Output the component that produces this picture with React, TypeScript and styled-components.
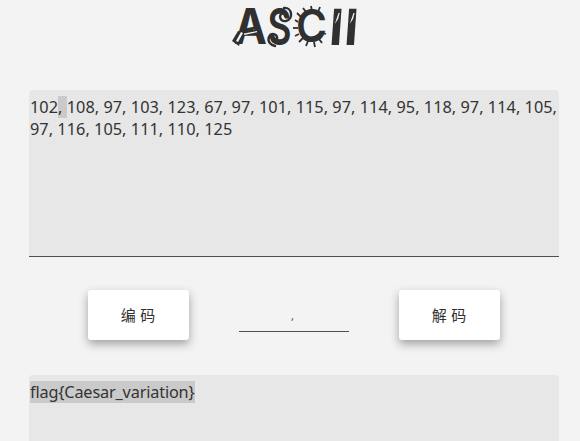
import React from 'react';
import styled, { createGlobalStyle } from 'styled-components';

const GlobalStyle = createGlobalStyle`
  * { box-sizing: border-box; }
  html, body { margin: 0; height: 100%; overflow: hidden; background: #f3f3f3; }
`;

const Page = styled.main`
  height: 441px;
  overflow: hidden;
  padding: 0 21px 0 29px;
  background: #f3f3f3;
  color: #333;
  font-family: 'Noto Sans', 'Noto Sans CJK SC', sans-serif;
`;

const Header = styled.header`
  display: flex;
  height: 90px;
  padding-left: 199px;
`;

const Logo = styled.svg`
  display: block;
  width: 136px;
  height: 54px;
  overflow: visible;
  font-family: 'Inter', sans-serif;
  font-weight: 700;
  fill: #303030;
`;

const TextPanel = styled.section<{ $height: number }>`
  height: ${({ $height }) => $height}px;
  padding: 6px 0 0 1px;
  background: #e7e7e7;
  border-bottom: 1px solid #505050;
  border-radius: 4px 4px 0 0;
  font-size: 16.3px;
  line-height: 22px;
  white-space: nowrap;
`;

const Line = styled.div<{ $spacing?: number }>`
  height: 22px;
  letter-spacing: ${({ $spacing = 0 }) => $spacing}px;
`;

const Selected = styled.span`
  display: inline-block;
  height: 22px;
  background: #cacaca;
  white-space: pre;
`;

const Controls = styled.div`
  display: flex;
  gap: 50px;
  height: 118px;
  padding: 33px 0 0 59px;
`;

const ActionButton = styled.button`
  width: 101px;
  height: 50px;
  padding: 0 1px 1px 0;
  border: 0;
  border-radius: 3px;
  background: #fff;
  box-shadow: 0 4px 10px rgba(0, 0, 0, 0.34);
  color: #303030;
  font: 15px/20px 'Noto Sans CJK SC', sans-serif;
  word-spacing: 1px;
`;

const Separator = styled.div`
  width: 110px;
  height: 42px;
  padding: 18px 3px 0 0;
  border-bottom: 1px solid #505050;
  font-size: 11px;
  line-height: 16px;
  text-align: center;
  color: #304c70;
`;

const spurs = [
  [301, 17, 297, 13], [306, 12, 303, 8], [312, 11, 311, 6],
  [318, 12, 320, 7], [298, 22, 295, 20], [298, 28, 293, 28],
  [299, 34, 295, 36], [303, 38, 299, 42], [308, 41, 306, 46],
  [314, 42, 315, 47], [319, 39, 322, 43], [322, 33, 326, 34],
];

function AsciiLogo() {
  return (
    <Logo viewBox="228 0 136 54" aria-label="ASCII">
      <text x="234" y="44" fontSize="50" textLength="33" lengthAdjust="spacingAndGlyphs">A</text>
      <path d="M232 41l6-10 5 1-4 14z" />
      <path d="M236 41l5-9 2 1-5 9z M244 33.5l13-2.5v1.2l-13 2.8z" fill="#f3f3f3" />
      <path d="M243 29l14-3v3l-14 3z" />
      <text x="267.5" y="45" fontSize="51" fontWeight="600" textLength="24" lengthAdjust="spacingAndGlyphs">S</text>
      <g fill="none" stroke="#303030" strokeWidth="2.4" strokeLinecap="round">
        <path d="M284 8c8-1 10 11 2 13-6 1-8-6-3-8 3-1 4 2 2 3" />
        <path d="M269 37c3-6 9-2 8 2-1 4-6 3-4 0" />
        <path d="M269 37c-2 5 2 8 6 9" />
      </g>
      <text x="296" y="42" fontSize="45" fontWeight="600" textLength="31" lengthAdjust="spacingAndGlyphs">C</text>
      <path d="M302 33c5 5 12 5 18-1v5c-4 6-13 7-18 1z" />
      <g stroke="#303030" strokeWidth="1.8">
        {spurs.map(([x1, y1, x2, y2], i) => <line key={i} x1={x1} y1={y1} x2={x2} y2={y2} />)}
      </g>
      {[328.3, 343.2].map((x) => (
        <g key={x} transform={`translate(${x} 45) skewX(-4)`}>
          <text x="0" y="0" fontSize="50" textLength="14" lengthAdjust="spacingAndGlyphs">I</text>
          <path d="M5-21L8-32h1.2L8-26z" fill="#f3f3f3" />
        </g>
      ))}
    </Logo>
  );
}

export default function App() {
  return (
    <>
      <GlobalStyle />
      <Page>
        <Header><AsciiLogo /></Header>
        <TextPanel $height={167}>
          <Line $spacing={0.035}>102<Selected>, </Selected>108, 97, 103, 123, 67, 97, 101, 115, 97, 114, 95, 118, 97, 114, 105,</Line>
          <Line $spacing={0.035}>97, 116, 105, 111, 110, 125</Line>
        </TextPanel>
        <Controls>
          <ActionButton>编 码</ActionButton>
          <Separator>,</Separator>
          <ActionButton>解 码</ActionButton>
        </Controls>
        <TextPanel $height={167}>
          <Line $spacing={-0.17}><Selected>{'flag{Caesar_variation}'}</Selected></Line>
        </TextPanel>
      </Page>
    </>
  );
}
